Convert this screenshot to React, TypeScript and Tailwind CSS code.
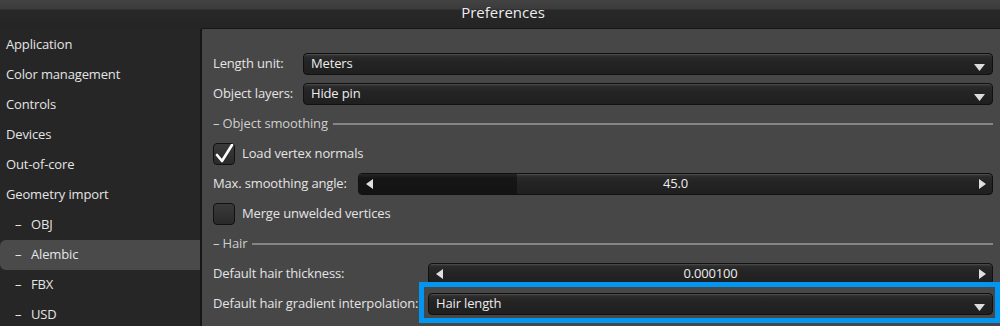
import type { ReactNode } from 'react';

const navItems = [
  { label: 'Application' },
  { label: 'Color management' },
  { label: 'Controls' },
  { label: 'Devices' },
  { label: 'Out-of-core' },
  { label: 'Geometry import' },
  { label: 'OBJ', sub: true },
  { label: 'Alembic', sub: true, active: true },
  { label: 'FBX', sub: true },
  { label: 'USD', sub: true },
];

const fieldBox =
  'relative flex h-[22px] flex-1 items-center rounded-[4px] border border-[#101010] bg-[linear-gradient(to_bottom,#3c3c3c_0px,#2a2a2a_3px,#242424_8px,#1f1f1f_100%)] shadow-[inset_0_1px_0_rgba(255,255,255,0.08)]';

function DownArrow() {
  return (
    <svg width="11" height="7" viewBox="0 0 11 7" className="absolute bottom-[3px] right-[7px]">
      <path d="M0 0 L11 0 L5.5 7 Z" fill="#dcdcdc" />
    </svg>
  );
}

function Dropdown({ value }: { value: string }) {
  return (
    <div className={fieldBox}>
      <span className="pl-[7px] text-[13px] text-[#ececec]">{value}</span>
      <DownArrow />
    </div>
  );
}

function Slider({ value, fill }: { value: string; fill: number }) {
  return (
    <div className={`${fieldBox} overflow-hidden`}>
      <div
        className="absolute inset-y-0 left-0 bg-[linear-gradient(to_bottom,#262626_0px,#161616_4px,#131313_100%)]"
        style={{ width: `${fill}%` }}
      />
      <svg width="7" height="10" viewBox="0 0 7 10" className="absolute left-[7px] top-[5px]">
        <path d="M7 0 L7 10 L0 5 Z" fill="#e0e0e0" />
      </svg>
      <span className="relative flex-1 text-center text-[13px] text-[#ececec]">{value}</span>
      <svg width="7" height="10" viewBox="0 0 7 10" className="absolute right-[6px] top-[5px]">
        <path d="M0 0 L0 10 L7 5 Z" fill="#e0e0e0" />
      </svg>
    </div>
  );
}

function Checkbox({ checked, label }: { checked?: boolean; label: string }) {
  return (
    <div className="flex h-[30px] items-center">
      <div className="flex h-[22px] w-[22px] items-center justify-center rounded-[4px] border border-[#111] bg-[linear-gradient(to_bottom,#3a3a3a,#2a2a2a)]">
        {checked ? (
          <svg width="20" height="20" viewBox="0 0 20 20">
            <path
              d="M3 11 L8 17 L18 1"
              fill="none"
              stroke="#ffffff"
              strokeWidth="2.6"
              strokeLinecap="round"
              strokeLinejoin="round"
            />
          </svg>
        ) : null}
      </div>
      <span className="ml-[7px] text-[13px] text-[#e4e4e4]">{label}</span>
    </div>
  );
}

function Row({ label, labelWidth, children }: { label: string; labelWidth: string; children: ReactNode }) {
  return (
    <div className="flex h-[30px] items-center">
      <span className={`${labelWidth} shrink-0 whitespace-nowrap text-[13px] text-[#e4e4e4]`}>{label}</span>
      {children}
    </div>
  );
}

function Section({ title }: { title: string }) {
  return (
    <div className="flex h-[30px] items-center">
      <span className="text-[13px] text-[#cfcfcf]">– {title}</span>
      <div className="ml-[5px] h-[2px] flex-1 bg-[#858585]" />
    </div>
  );
}

export default function App() {
  return (
    <div
      className="flex h-[326px] w-[1000px] flex-col overflow-hidden bg-[#262626] tracking-[-0.15px] text-[#e4e4e4]"
      style={{ fontFamily: '"Open Sans", "DejaVu Sans", sans-serif' }}>
      <header className="flex h-[28px] shrink-0 items-start justify-center bg-[linear-gradient(to_bottom,#434343_0px,#3b3b3b_9px,#282828_10px,#242424_100%)]">
        <span className="ml-[6px] mt-[1px] text-[15px] tracking-normal text-[#ececec]">Preferences</span>
      </header>

      <div className="flex flex-1">
        <nav className="w-[200px] shrink-0 bg-[#262626] pt-[2px]">
          {navItems.map((item) => (
            <div
              key={item.label}
              className={`flex h-[30px] items-center text-[13px] ${item.sub ? 'pl-[15px]' : 'pl-[6px]'} ${
                item.active ? 'rounded-l-[6px] bg-[#4a4a4a]' : ''
              }`}>
              {item.sub ? <span className="w-[16px]">–</span> : null}
              <span>{item.label}</span>
            </div>
          ))}
        </nav>

        <main className="flex-1 rounded-tl-[3px] border-l-2 border-t border-[#161616] bg-[#474747] pl-[11px] pr-[7px] pt-[20px]">
          <Row label="Length unit:" labelWidth="w-[90px]">
            <Dropdown value="Meters" />
          </Row>
          <Row label="Object layers:" labelWidth="w-[90px]">
            <Dropdown value="Hide pin" />
          </Row>
          <Section title="Object smoothing" />
          <Checkbox checked label="Load vertex normals" />
          <Row label="Max. smoothing angle:" labelWidth="w-[145px]">
            <Slider value="45.0" fill={25} />
          </Row>
          <Checkbox label="Merge unwelded vertices" />
          <Section title="Hair" />
          <Row label="Default hair thickness:" labelWidth="w-[215px]">
            <Slider value="0.000100" fill={0} />
          </Row>
          <Row label="Default hair gradient interpolation:" labelWidth="w-[215px]">
            <div className="relative flex flex-1">
              <div className="pointer-events-none absolute -bottom-[8px] -left-[9px] -right-[7px] -top-[11px] border-[5px] border-[#0096f2]" />
              <Dropdown value="Hair length" />
            </div>
          </Row>
        </main>
      </div>
    </div>
  );
}
